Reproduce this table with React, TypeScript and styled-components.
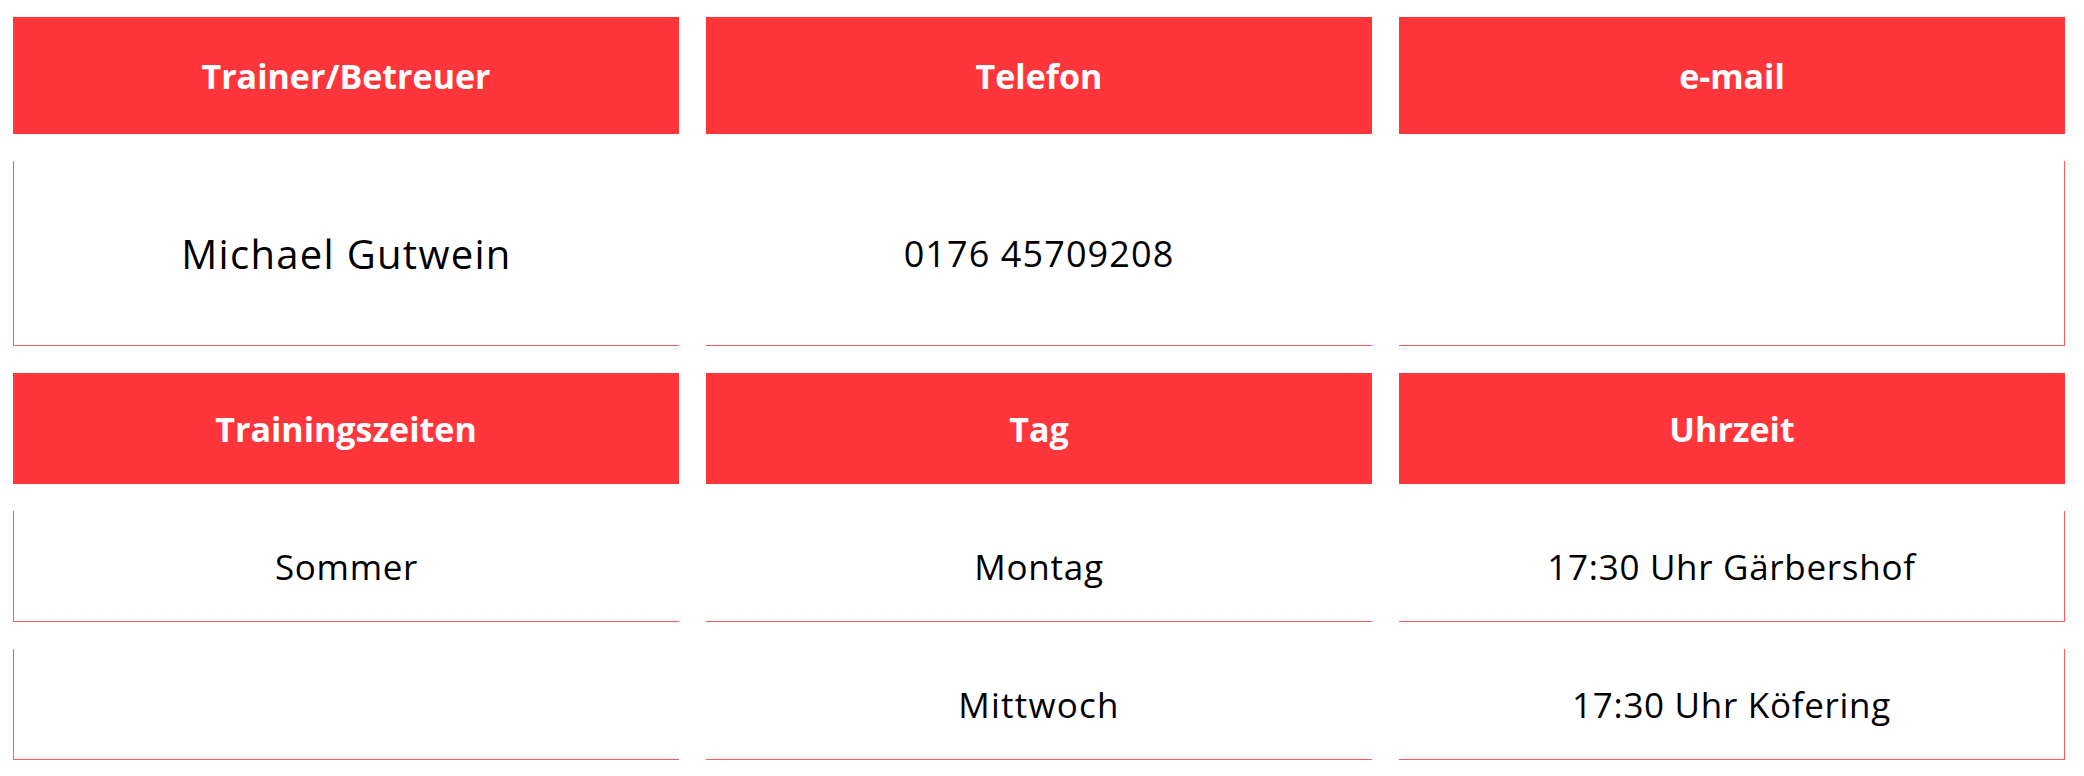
import React from 'react';
import styled, { createGlobalStyle } from 'styled-components';

const GlobalStyle = createGlobalStyle`
  html, body {
    margin: 0;
    padding: 0;
    background: #ffffff;
  }
  body {
    font-family: 'Open Sans', 'Liberation Sans', sans-serif;
  }
`;

const Table = styled.div`
  display: flex;
  flex-direction: column;
  gap: 27px;
  padding: 17px 19px 0 13px;
  width: 2052px;
  box-sizing: border-box;
`;

const Row = styled.div`
  display: grid;
  grid-template-columns: repeat(3, 666px);
  column-gap: 27px;
`;

const HeadCell = styled.div<{ $height: number }>`
  height: ${(p) => p.$height}px;
  background: #ff353c;
  color: #ffffff;
  display: flex;
  align-items: center;
  justify-content: center;
  font-size: 34px;
  font-weight: 700;
`;

type Edge = 'left' | 'right' | 'none';

const BodyCell = styled.div<{ $height: number; $edge: Edge; $size: number; $spacing: number }>`
  height: ${(p) => p.$height}px;
  box-sizing: border-box;
  border-bottom: 1px solid #ff5c62;
  border-left: ${(p) => (p.$edge === 'left' ? '1px solid #ff5c62' : 'none')};
  border-right: ${(p) => (p.$edge === 'right' ? '1px solid #ff5c62' : 'none')};
  display: flex;
  align-items: center;
  justify-content: center;
  color: #000000;
  font-size: ${(p) => p.$size}px;
  font-weight: 400;
  letter-spacing: ${(p) => p.$spacing}px;
`;

const edges: Edge[] = ['left', 'none', 'right'];

interface BodyRow {
  cells: string[];
  height: number;
  size: number[];
  spacing: number[];
}

interface Section {
  head: string[];
  headHeight: number;
  rows: BodyRow[];
}

const sections: Section[] = [
  {
    head: ['Trainer/Betreuer', 'Telefon', 'e-mail'],
    headHeight: 117,
    rows: [
      {
        cells: ['Michael Gutwein', '0176 45709208', ''],
        height: 185,
        size: [40, 36, 36],
        spacing: [1.3, 1.1, 1],
      },
    ],
  },
  {
    head: ['Trainingszeiten', 'Tag', 'Uhrzeit'],
    headHeight: 111,
    rows: [
      {
        cells: ['Sommer', 'Montag', '17:30 Uhr Gärbershof'],
        height: 111,
        size: [35, 35, 35],
        spacing: [0.7, 0.8, 0.7],
      },
      {
        cells: ['', 'Mittwoch', '17:30 Uhr Köfering'],
        height: 111,
        size: [35, 35, 35],
        spacing: [0.7, 1.2, 0.7],
      },
    ],
  },
];

export default function App() {
  return (
    <>
      <GlobalStyle />
      <Table>
        {sections.map((s) => (
          <React.Fragment key={s.head[0]}>
            <Row>
              {s.head.map((h) => (
                <HeadCell key={h} $height={s.headHeight}>
                  {h}
                </HeadCell>
              ))}
            </Row>
            {s.rows.map((r, i) => (
              <Row key={i}>
                {r.cells.map((c, j) => (
                  <BodyCell
                    key={j}
                    $height={r.height}
                    $edge={edges[j]}
                    $size={r.size[j]}
                    $spacing={r.spacing[j]}
                  >
                    {c}
                  </BodyCell>
                ))}
              </Row>
            ))}
          </React.Fragment>
        ))}
      </Table>
    </>
  );
}
